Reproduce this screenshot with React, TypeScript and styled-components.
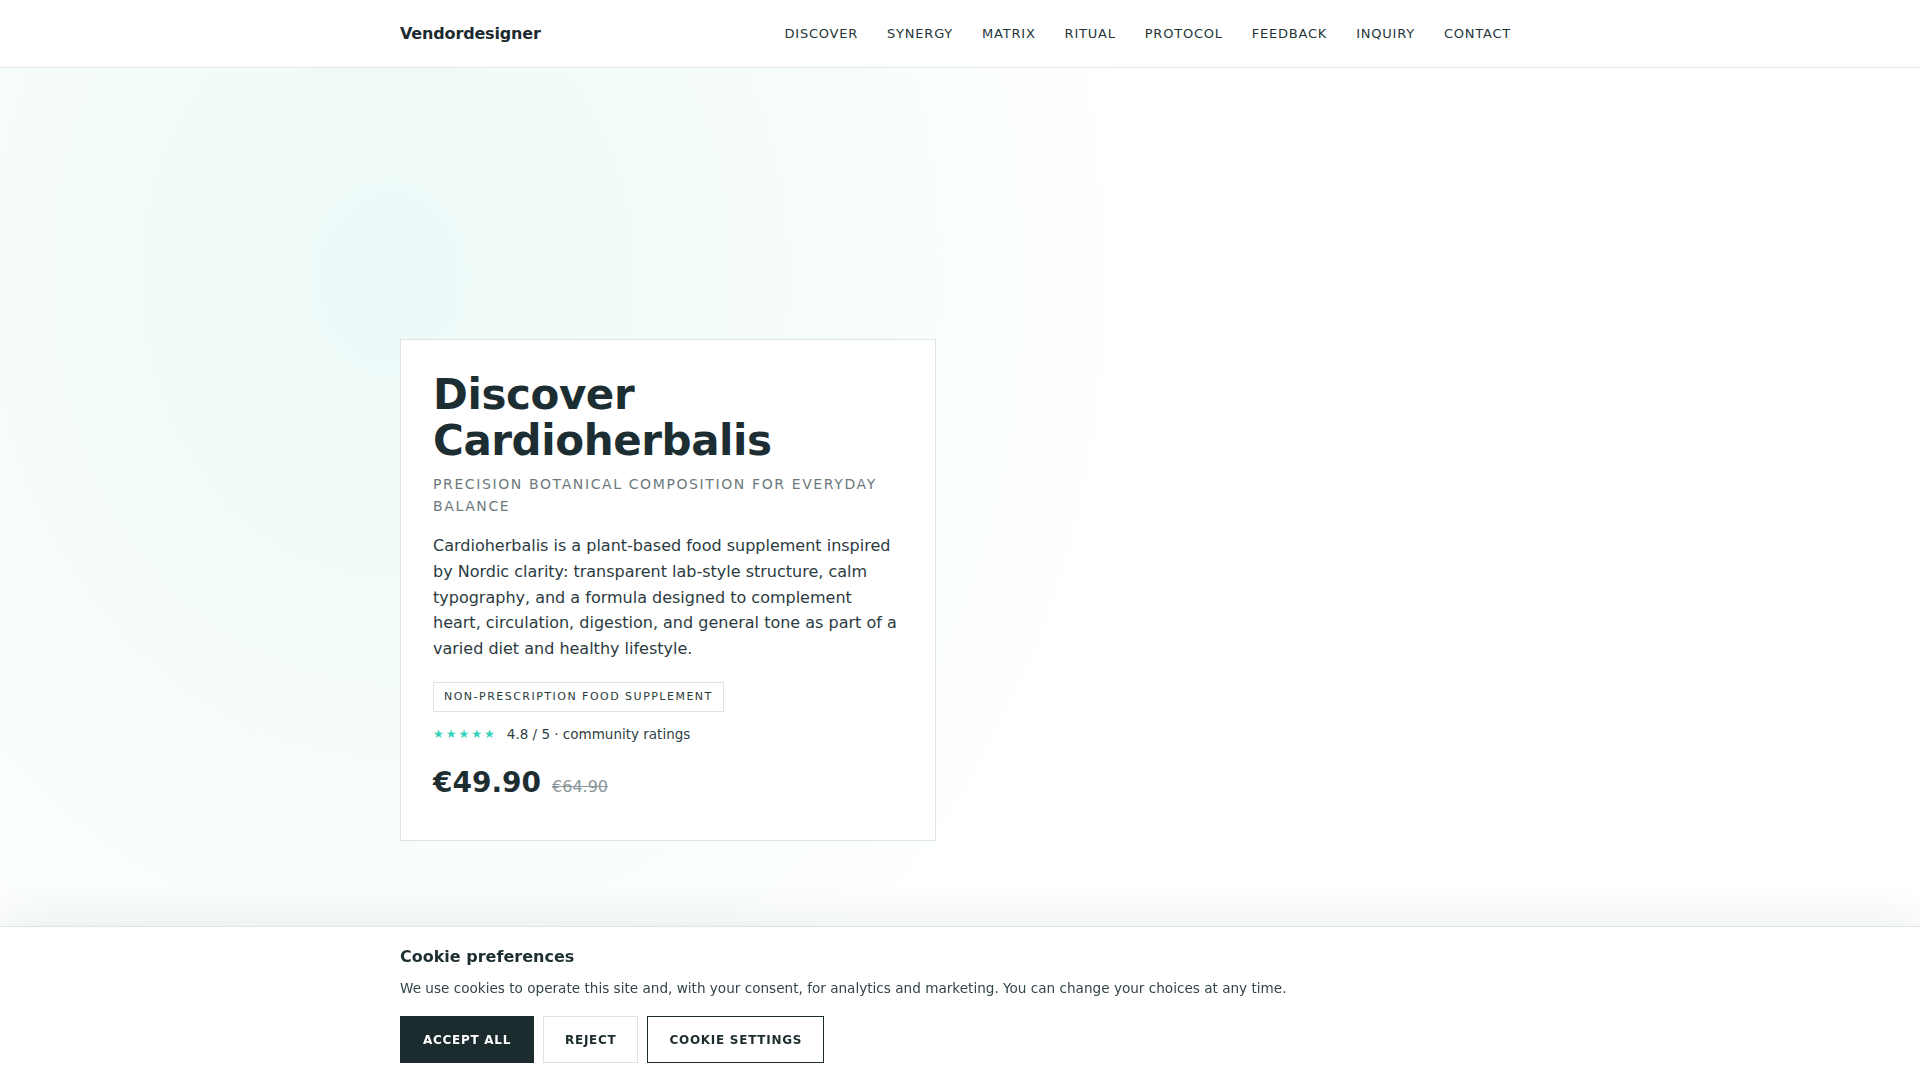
import React, { FC } from 'react'
import styled, { createGlobalStyle } from 'styled-components'

const GlobalStyle = createGlobalStyle`
    * { box-sizing: border-box; }
    html, body {
        margin: 0;
        padding: 0;
        background: #ffffff;
        font-family: "DejaVu Sans", "Noto Sans", sans-serif;
        color: #1b2b2f;
    }
`

const Container = styled.div`
    width: 1120px;
    margin: 0 auto;
`

const Header = styled.header`
    height: 68px;
    background: #ffffff;
    border-bottom: 1px solid #e1e6e6;
`

const HeaderInner = styled(Container)`
    height: 100%;
    display: flex;
    align-items: center;
    justify-content: space-between;
`

const Logo = styled.div`
    font-size: 16px;
    font-weight: 700;
    letter-spacing: -0.01em;
    color: #1b2b2f;
`

const Nav = styled.nav`
    display: flex;
    gap: 29px;
    margin-right: 9px;
`

const NavLink = styled.a`
    font-size: 13px;
    letter-spacing: 0.06em;
    text-transform: uppercase;
    color: #25363a;
    text-decoration: none;
`

const Hero = styled.section`
    min-height: 1012px;
    padding: 271px 0 120px;
    background: radial-gradient(ellipse 780px 940px at 390px 210px, rgba(200, 238, 233, 0.34), rgba(255, 255, 255, 0) 100%);
`

const HeroGrid = styled(Container)`
    display: grid;
    grid-template-columns: 536px 1fr;
    gap: 48px;
`

const Card = styled.article`
    background: #ffffff;
    border: 1px solid #dfe5e5;
    padding: 32px 32px 40px;
`

const Title = styled.h1`
    margin: 0 0 9px;
    font-size: 42px;
    line-height: 1.1;
    font-weight: 700;
    letter-spacing: -0.01em;
    color: #1d2e32;
`

const Subtitle = styled.p`
    margin: 0 0 16px;
    font-size: 14px;
    line-height: 22px;
    letter-spacing: 0.115em;
    text-transform: uppercase;
    color: #6c7a7d;
`

const Lead = styled.p`
    margin: 0 0 21px;
    font-size: 16px;
    line-height: 25.6px;
    color: #2b3b3f;
`

const Badge = styled.span`
    display: inline-block;
    padding: 7px 10px;
    border: 1px solid #dde3e3;
    font-size: 11px;
    line-height: 14px;
    letter-spacing: 0.135em;
    text-transform: uppercase;
    color: #2b3a3d;
`

const Rating = styled.div`
    margin-top: 12px;
    display: flex;
    align-items: center;
    gap: 10px;
    font-size: 13.5px;
    line-height: 20px;
    color: #2f3f43;
`

const Stars = styled.span`
    font-size: 12px;
    letter-spacing: 2px;
    color: #34d3bd;
`

const PriceRow = styled.div`
    margin-top: 22px;
    display: flex;
    align-items: baseline;
    gap: 11px;
`

const Price = styled.span`
    font-size: 28px;
    line-height: 34px;
    font-weight: 700;
    color: #1d2e32;
`

const OldPrice = styled.s`
    font-size: 16px;
    color: #8a9698;
`

const Banner = styled.div`
    position: fixed;
    left: 0;
    right: 0;
    bottom: 0;
    background: #ffffff;
    border-top: 1px solid #dfe4e4;
    box-shadow: 0 -12px 34px rgba(20, 40, 45, 0.06);
    padding: 19px 0 17px;
`

const BannerTitle = styled.h2`
    margin: 0 0 10px;
    font-size: 16px;
    line-height: 22px;
    font-weight: 700;
    color: #1d2e32;
`

const BannerText = styled.p`
    margin: 0 0 18px;
    font-size: 13.6px;
    line-height: 20px;
    color: #33454a;
`

const Actions = styled.div`
    display: flex;
    gap: 9px;
`

const Button = styled.button<{ $variant: 'solid' | 'ghost' | 'outline' }>`
    height: 47px;
    padding: 0 ${p => p.$variant === 'solid' ? 22 : 21}px;
    font-family: inherit;
    font-size: 12px;
    font-weight: 700;
    letter-spacing: 0.06em;
    text-transform: uppercase;
    cursor: pointer;
    background: ${p => p.$variant === 'solid' ? '#1b2b2e' : '#ffffff'};
    color: ${p => p.$variant === 'solid' ? '#ffffff' : '#1b2b2e'};
    border: 1px solid ${p => p.$variant === 'ghost' ? '#dde3e3' : '#1b2b2e'};
`

const navItems = ['Discover', 'Synergy', 'Matrix', 'Ritual', 'Protocol', 'Feedback', 'Inquiry', 'Contact']

const App: FC = () => {
    return (
    <>
        <GlobalStyle />
        <Header>
            <HeaderInner>
                <Logo>Vendordesigner</Logo>
                <Nav>
                    {navItems.map(item => <NavLink key={item} href={'#' + item.toLowerCase()}>{item}</NavLink>)}
                </Nav>
            </HeaderInner>
        </Header>

        <Hero>
            <HeroGrid>
                <Card>
                    <Title>Discover Cardioherbalis</Title>
                    <Subtitle>Precision botanical composition for everyday balance</Subtitle>
                    <Lead>
                        Cardioherbalis is a plant-based food supplement inspired by Nordic clarity: transparent lab-style structure, calm typography, and a formula designed to complement heart, circulation, digestion, and general tone as part of a varied diet and healthy lifestyle.
                    </Lead>
                    <Badge>Non-prescription food supplement</Badge>
                    <Rating>
                        <Stars>★★★★★</Stars>
                        <span>4.8 / 5 · community ratings</span>
                    </Rating>
                    <PriceRow>
                        <Price>€49.90</Price>
                        <OldPrice>€64.90</OldPrice>
                    </PriceRow>
                </Card>
                <div />
            </HeroGrid>
        </Hero>

        <Banner>
            <Container>
                <BannerTitle>Cookie preferences</BannerTitle>
                <BannerText>We use cookies to operate this site and, with your consent, for analytics and marketing. You can change your choices at any time.</BannerText>
                <Actions>
                    <Button $variant="solid">Accept all</Button>
                    <Button $variant="ghost">Reject</Button>
                    <Button $variant="outline">Cookie settings</Button>
                </Actions>
            </Container>
        </Banner>
    </>
    )
}

export default App
